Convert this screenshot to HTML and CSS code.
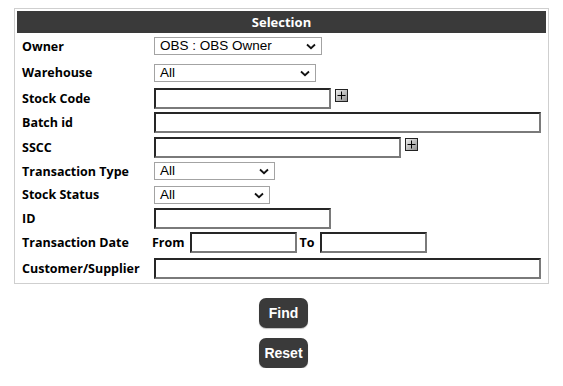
FILE: index.html
```html
<!DOCTYPE html>
<html lang="en">
<head>
<meta charset="utf-8">
<title>Selection</title>
<link rel="stylesheet" href="styles.css">
</head>
<body>
<div class="page">
  <div class="panel">
    <div class="panel-head">Selection</div>
    <div class="rows">
      <div class="row r1">
        <span class="lbl">Owner</span>
        <span class="sel w-owner"><span class="sel-text">OBS : OBS Owner</span><svg class="chev" width="10" height="7" viewBox="0 0 10 7"><path d="M1 1.5 L5 5.2 L9 1.5" fill="none" stroke="#111" stroke-width="1.8"/></svg></span>
      </div>
      <div class="row r2">
        <span class="lbl">Warehouse</span>
        <span class="sel w-wh"><span class="sel-text">All</span><svg class="chev" width="10" height="7" viewBox="0 0 10 7"><path d="M1 1.5 L5 5.2 L9 1.5" fill="none" stroke="#111" stroke-width="1.8"/></svg></span>
      </div>
      <div class="row r3">
        <span class="lbl">Stock Code</span>
        <input class="inp w-short" type="text">
        <span class="plus"><svg width="13" height="13" viewBox="0 0 13 13"><defs><linearGradient id="g1" x1="0" y1="0" x2="1" y2="1"><stop offset="0" stop-color="#f4f4f4"/><stop offset="1" stop-color="#8c8c8c"/></linearGradient></defs><rect x="0.5" y="0.5" width="12" height="12" fill="url(#g1)" stroke="#222"/><path d="M6.5 2.5 V10.5 M2.5 6.5 H10.5" stroke="#000" stroke-width="1"/></svg></span>
      </div>
      <div class="row r4">
        <span class="lbl">Batch id</span>
        <input class="inp w-long" type="text">
      </div>
      <div class="row r5">
        <span class="lbl">SSCC</span>
        <input class="inp w-mid" type="text">
        <span class="plus"><svg width="13" height="13" viewBox="0 0 13 13"><defs><linearGradient id="g2" x1="0" y1="0" x2="1" y2="1"><stop offset="0" stop-color="#f4f4f4"/><stop offset="1" stop-color="#8c8c8c"/></linearGradient></defs><rect x="0.5" y="0.5" width="12" height="12" fill="url(#g2)" stroke="#222"/><path d="M6.5 2.5 V10.5 M2.5 6.5 H10.5" stroke="#000" stroke-width="1"/></svg></span>
      </div>
      <div class="row r6">
        <span class="lbl">Transaction Type</span>
        <span class="sel w-tt"><span class="sel-text">All</span><svg class="chev" width="10" height="7" viewBox="0 0 10 7"><path d="M1 1.5 L5 5.2 L9 1.5" fill="none" stroke="#111" stroke-width="1.8"/></svg></span>
      </div>
      <div class="row r7">
        <span class="lbl">Stock Status</span>
        <span class="sel w-ss"><span class="sel-text">All</span><svg class="chev" width="10" height="7" viewBox="0 0 10 7"><path d="M1 1.5 L5 5.2 L9 1.5" fill="none" stroke="#111" stroke-width="1.8"/></svg></span>
      </div>
      <div class="row r8">
        <span class="lbl">ID</span>
        <input class="inp w-short" type="text">
      </div>
      <div class="row r9">
        <span class="lbl">Transaction Date</span>
        <span class="sub from">From</span>
        <input class="inp w-date" type="text">
        <span class="sub to">To</span>
        <input class="inp w-date" type="text">
      </div>
      <div class="row r10">
        <span class="lbl">Customer/Supplier</span>
        <input class="inp w-long" type="text">
      </div>
    </div>
  </div>
  <div class="actions">
    <button class="btn" type="button">Find</button>
    <button class="btn" type="button">Reset</button>
  </div>
</div>
</body>
</html>
```
FILE: styles.css
```css
html, body {
  margin: 0;
  padding: 0;
  background: #fff;
}
.page {
  padding: 8px 14px 0 14px;
  font-family: "Open Sans", "DejaVu Sans", sans-serif;
  color: #000;
}
.panel {
  border: 1px solid #cfcfcf;
  padding: 2px;
}
.panel-head {
  height: 22px;
  background: #3a3a3a;
  color: #fff;
  font-weight: 700;
  font-size: 13px;
  line-height: 22px;
  text-align: center;
}
.rows {
  display: flex;
  flex-direction: column;
}
.row {
  display: flex;
  align-items: center;
}
.r1 { height: 26px; }
.r2 { height: 27px; }
.r3 { height: 24px; }
.r4 { height: 25px; }
.r5 { height: 24px; }
.r6 { height: 24px; }
.r7 { height: 23px; }
.r8 { height: 24px; }
.r9 { height: 25px; }
.r10 { height: 26px; }
.lbl {
  width: 137px;
  padding-left: 5px;
  box-sizing: border-box;
  flex: none;
  font-weight: 700;
  font-size: 12.5px;
  white-space: nowrap;
}
.sub {
  font-weight: 700;
  font-size: 12.5px;
}
.from { margin-left: -2px; margin-right: 5px; }
.to { margin-left: 3px; margin-right: 5px; }
.inp {
  box-sizing: border-box;
  height: 21px;
  margin: 0;
  padding: 0 3px;
  border-style: solid;
  border-width: 2px;
  border-color: #262626 #7a7a7a #7a7a7a #262626;
  background: #fff;
  font-family: "Liberation Sans", Arial, sans-serif;
  font-size: 13px;
  outline: none;
}
.w-short { width: 177px; }
.w-mid { width: 247px; }
.w-long { width: 387px; }
.w-date { width: 107px; }
.sel {
  position: relative;
  box-sizing: border-box;
  height: 18px;
  border: 1px solid #a3a3a3;
  background: #fff;
  display: flex;
  align-items: center;
  padding-left: 5px;
  font-family: "Liberation Sans", Arial, sans-serif;
  font-size: 13.5px;
  color: #000;
}
.sel-text { line-height: 16px; }
.chev {
  position: absolute;
  right: 5px;
  top: 5px;
}
.w-owner { width: 168px; }
.w-wh { width: 162px; }
.w-tt { width: 121px; }
.w-ss { width: 116px; }
.plus {
  display: flex;
  margin-left: 4px;
  margin-bottom: 5px;
}
.actions {
  display: flex;
  flex-direction: column;
  align-items: center;
  gap: 10px;
  padding-top: 14px;
  padding-left: 4px;
}
.btn {
  width: 49px;
  height: 30px;
  border: none;
  border-radius: 7px;
  background: #3a3a3a;
  color: #fff;
  font-family: "Liberation Sans", Arial, sans-serif;
  font-weight: 700;
  font-size: 14px;
  padding: 0;
  box-shadow: 0 1px 1px rgba(0,0,0,0.25);
}
```
